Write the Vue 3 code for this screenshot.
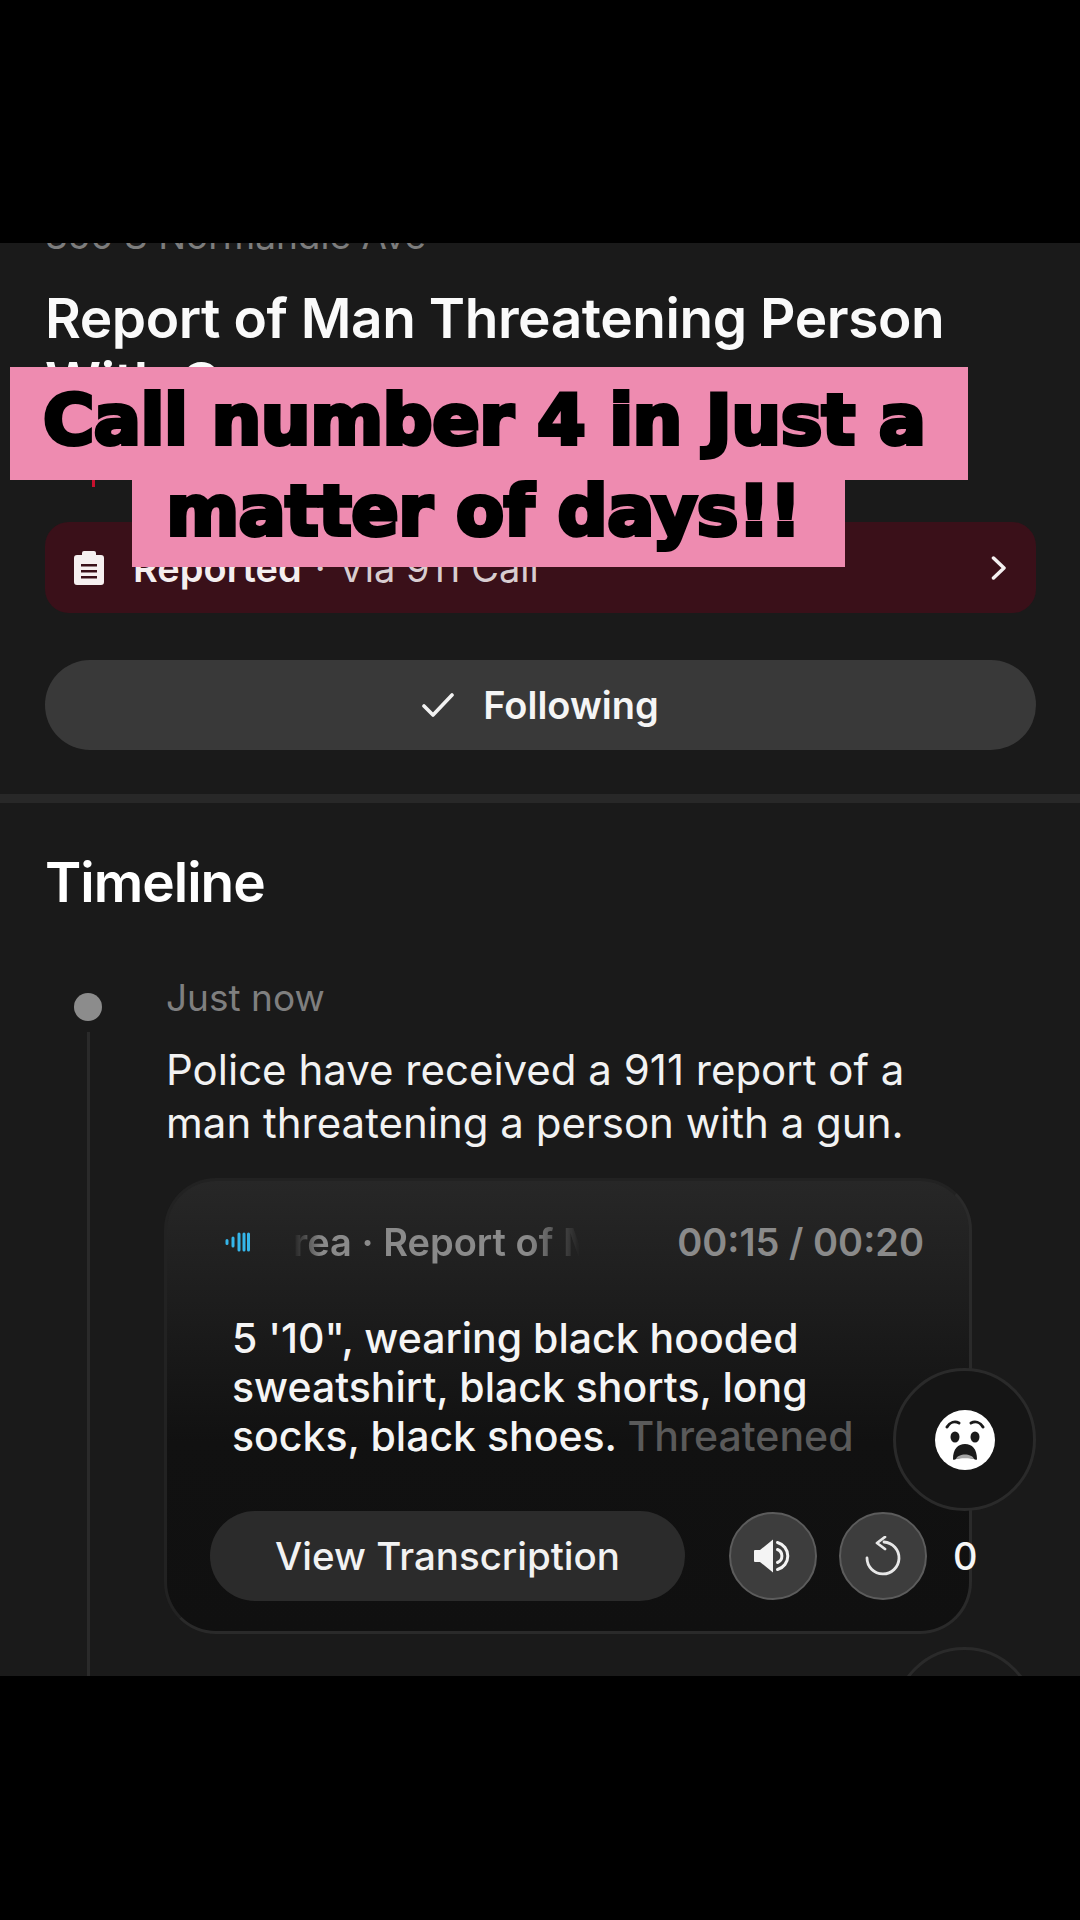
<template>
  <div class="page">
    <div class="screen">
      <div class="scroller">
        <p class="address">350 S Normandie Ave</p>
        <h1 class="title">Report of Man Threatening Person With Gun</h1>
        <div class="red-tick"></div>

        <div class="status">
          <svg class="clip-icon" viewBox="0 0 30 34">
            <path fill="#f6f0f0" d="M10 0h10a2 2 0 0 1 2 2v2h5a3 3 0 0 1 3 3v24a3 3 0 0 1-3 3H3a3 3 0 0 1-3-3V7a3 3 0 0 1 3-3h5V2a2 2 0 0 1 2-2z" />
            <path fill="#3a1019" d="M7 13h16v2.600H7zM7 19h16v2.600H7zM7 25h16v2.600H7z" />
          </svg>
          <span class="status-text"><b>Reported</b><i>·</i>Via 911 Call</span>
          <svg class="chevron" viewBox="0 0 16 24">
            <path d="M2.500 2 13 12 2.500 22" fill="none" stroke="#f4f0f0" stroke-width="3.500" stroke-linecap="round" stroke-linejoin="round" />
          </svg>
        </div>

        <button class="follow">
          <svg class="check" viewBox="0 0 32 24">
            <path d="M2 13l9 9L30 2" fill="none" stroke="#f2f2f2" stroke-width="3.600" stroke-linecap="round" stroke-linejoin="round" />
          </svg>
          Following
        </button>

        <div class="divider"></div>

        <h2 class="section">Timeline</h2>

        <div class="entry">
          <div class="rail">
            <span class="dot"></span>
            <span class="line"></span>
          </div>
          <div class="entry-body">
            <p class="when">Just now</p>
            <p class="desc">Police have received a 911 report of a man threatening a person with a gun.</p>

            <div class="card">
              <div class="card-head">
                <svg class="wave" viewBox="0 0 25 20">
                  <g stroke="#35b6ea" stroke-width="3" stroke-linecap="round">
                    <path d="M2 8.500v3M8 6v8M14 2v16M19 2v16M23.500 2v16" />
                  </g>
                </svg>
                <div class="marquee"><span>rea · Report of Man Threatening</span></div>
                <span class="time">00:15 / 00:20</span>
              </div>
              <p class="transcript">5 '10", wearing black hooded sweatshirt, black shorts, long socks, black shoes. <span class="dim">Threatened</span></p>
              <div class="controls">
                <button class="view">View Transcription</button>
                <button class="round">
                  <svg viewBox="0 0 38 34" width="38" height="34">
                    <path fill="#f4f4f4" d="M1 11h5L19 .5v33L6 23H1a1 1 0 0 1-1-1V12a1 1 0 0 1 1-1z" />
                    <path d="M23.500 10.500a7 7 0 0 1 0 13M23.500 3.500a14 14 0 0 1 0 27" fill="none" stroke="#f4f4f4" stroke-width="3" stroke-linecap="round" />
                  </svg>
                </button>
                <button class="round">
                  <svg viewBox="0 0 40 40" width="40" height="40">
                    <path d="M21 6A16 16 0 1 1 4 22" fill="none" stroke="#e8e8e8" stroke-width="2.800" stroke-linecap="round" />
                    <path d="M22 1 14 7l8 6" fill="none" stroke="#e8e8e8" stroke-width="2.800" stroke-linecap="round" stroke-linejoin="round" />
                  </svg>
                </button>
                <span class="count">0</span>
              </div>
            </div>
          </div>
        </div>
      </div>

      <!-- reactions float over the page -->
      <div class="reaction first">
        <svg viewBox="0 0 60 60" width="60" height="60">
          <circle cx="30" cy="30" r="30" fill="#fff" />
          <path d="M12 17c3-5 8-6 12-4M48 17c-3-5-8-6-12-4" fill="none" stroke="#1a1a1a" stroke-width="3" stroke-linecap="round" />
          <ellipse cx="20" cy="27" rx="4.500" ry="5.500" fill="#1a1a1a" />
          <ellipse cx="40" cy="27" rx="4.500" ry="5.500" fill="#1a1a1a" />
          <path d="M18 49c0-10 5-15 12-15s12 5 12 15c0 1-1 1-2 .5C36 47 24 47 20 49.500c-1 .5-2 .5-2-.5z" fill="#1a1a1a" />
          <path d="M21 49c2-6 16-6 18 0-5-1-13-1-18 0z" fill="#a5a5a5" />
        </svg>
      </div>
      <div class="reaction second"></div>
    </div>

    <!-- caption burned on top of the recording -->
    <div class="caption">
      <div class="cap-line one">Call number 4 in Just a</div>
      <div class="cap-line two">matter of days!!</div>
    </div>
  </div>
</template>

<script setup>
</script>

<style>
html, body {
  margin: 0;
  background: #000;
}
</style>

<style scoped>
.page {
  position: relative;
  width: 1080px;
  height: 1920px;
  background: #000;
  padding-top: 243px;
  box-sizing: border-box;
  font-family: Inter, "Liberation Sans", sans-serif;
  color: #fff;
}

.screen {
  position: relative;
  height: 1433px;
  overflow: hidden;
  background: #1a1a1a;
}

.scroller {
  padding: 0 44px 0 45px;
  margin-top: -29px;
}

p, h1, h2 {
  margin: 0;
}

.address {
  font-size: 37px;
  line-height: 44px;
  color: #7d7d7d;
}

.title {
  margin-top: 28px;
  font-size: 55px;
  line-height: 64px;
  font-weight: 600;
  letter-spacing: -0.45px;
  color: #fafafa;
  width: 960px;
}

.red-tick {
  width: 3px;
  height: 7px;
  margin: 66px 0 35px 47px;
  background: #c8102e;
}

.status {
  display: flex;
  align-items: center;
  height: 91px;
  border-radius: 24px;
  background: #3a1019;
  padding: 0 29px 0 29px;
}

.clip-icon {
  width: 30px;
  height: 34px;
}

.status-text {
  margin-left: 29px;
  font-size: 38px;
  color: #d8cdd0;
  flex: 1;
}

.status-text b {
  font-weight: 600;
  color: #f4eeef;
}

.status-text i {
  font-style: normal;
  margin: 0 13px;
}

.chevron {
  width: 16px;
  height: 24px;
}

.follow {
  display: flex;
  align-items: center;
  justify-content: center;
  gap: 29px;
  width: 100%;
  height: 90px;
  margin-top: 47px;
  border: 0;
  border-radius: 45px;
  background: #393939;
  color: #f5f5f5;
  font: 600 38px Inter, sans-serif;
}

.check {
  width: 32px;
  height: 24px;
}

.divider {
  height: 9px;
  margin: 44px -45px 0;
  background: #282828;
}

.section {
  margin-top: 49px;
  font-size: 55px;
  line-height: 60px;
  font-weight: 600;
  letter-spacing: -1px;
  color: #fff;
}

.entry {
  display: flex;
  margin-top: 64px;
}

.rail {
  display: flex;
  flex-direction: column;
  align-items: center;
  width: 28px;
  margin: 17px 0 0 29px;
}

.dot {
  width: 28px;
  height: 28px;
  border-radius: 50%;
  background: #8c8c8c;
}

.line {
  flex: 1;
  width: 3px;
  margin-top: 11px;
  background: #2a2a2a;
}

.entry-body {
  margin-left: 64px;
  width: 806px;
}

.when {
  font-size: 37px;
  line-height: 44px;
  color: #7f7f7f;
}

.desc {
  margin-top: 23px;
  font-size: 42px;
  line-height: 53px;
  color: #f2f2f2;
  width: 760px;
}

.card {
  margin: 29px 0 100px -2px;
  height: 456px;
  box-sizing: border-box;
  padding: 39px 0 0 43px;
  border: 3px solid #222;
  border-bottom-color: #2a2a2a;
  border-right-color: #2a2a2a;
  border-radius: 52px;
  background: linear-gradient(#272727, #111 58%, #101010);
}

.card-head {
  display: flex;
  align-items: center;
  height: 44px;
  font-size: 38px;
  font-weight: 600;
  color: #8a8a8a;
  padding-right: 45px;
}

.wave {
  width: 25px;
  height: 20px;
  margin-left: 15px;
}

.marquee {
  width: 287px;
  margin-left: 43px;
  overflow: hidden;
  white-space: nowrap;
  -webkit-mask-image: linear-gradient(90deg, transparent, #000 10%, #000 82%, transparent);
  mask-image: linear-gradient(90deg, transparent, #000 10%, #000 82%, transparent);
}

.time {
  margin-left: auto;
  white-space: nowrap;
}

.transcript {
  margin: 50px 0 0 22px;
  width: 680px;
  font-size: 41px;
  line-height: 49px;
  font-weight: 500;
  color: #f5f5f5;
}

.dim {
  color: #5a5a5a;
}

.controls {
  display: flex;
  align-items: center;
  margin-top: 50px;
}

.view {
  flex: none;
  width: 475px;
  height: 90px;
  border: 0;
  border-radius: 45px;
  background: #2b2b2b;
  color: #f2f2f2;
  font: 500 38.5px Inter, sans-serif;
}

.round {
  display: flex;
  align-items: center;
  justify-content: center;
  flex: none;
  width: 88px;
  height: 88px;
  margin-left: 44px;
  padding: 0;
  box-sizing: border-box;
  border: 2px solid #5c5c5c;
  border-radius: 50%;
  background: #3d3d3d;
}

.round + .round {
  margin-left: 22px;
}

.count {
  flex: none;
  margin-left: 26px;
  font-size: 38px;
  font-weight: 500;
  color: #f6f6f6;
}

.reaction {
  position: absolute;
  left: 893px;
  display: flex;
  align-items: center;
  justify-content: center;
  width: 143px;
  height: 143px;
  box-sizing: border-box;
  border: 3px solid #2a2a2a;
  border-radius: 50%;
  background: #151515;
}

.reaction.first {
  top: 1125px;
}

.reaction.second {
  top: 1404px;
  background: #1a1a1a;
}

.caption {
  position: absolute;
  top: 367px;
  left: 0;
  width: 1080px;
  display: flex;
  flex-direction: column;
  align-items: flex-start;
  color: #000;
}

.cap-line {
  font-family: "DejaVu Sans", sans-serif;
  font-weight: 700;
  background: #ee8bb0;
  -webkit-text-stroke: 4px #000;
  white-space: nowrap;
  font-size: 70px;
  letter-spacing: -0.5px;
  box-sizing: border-box;
}

.one {
  margin-left: 10px;
  width: 958px;
  height: 113px;
  line-height: 106px;
  padding-left: 33px;
}

.two {
  margin-left: 132px;
  width: 713px;
  height: 87px;
  line-height: 62px;
  padding-right: 10px;
  text-align: center;
}
</style>
